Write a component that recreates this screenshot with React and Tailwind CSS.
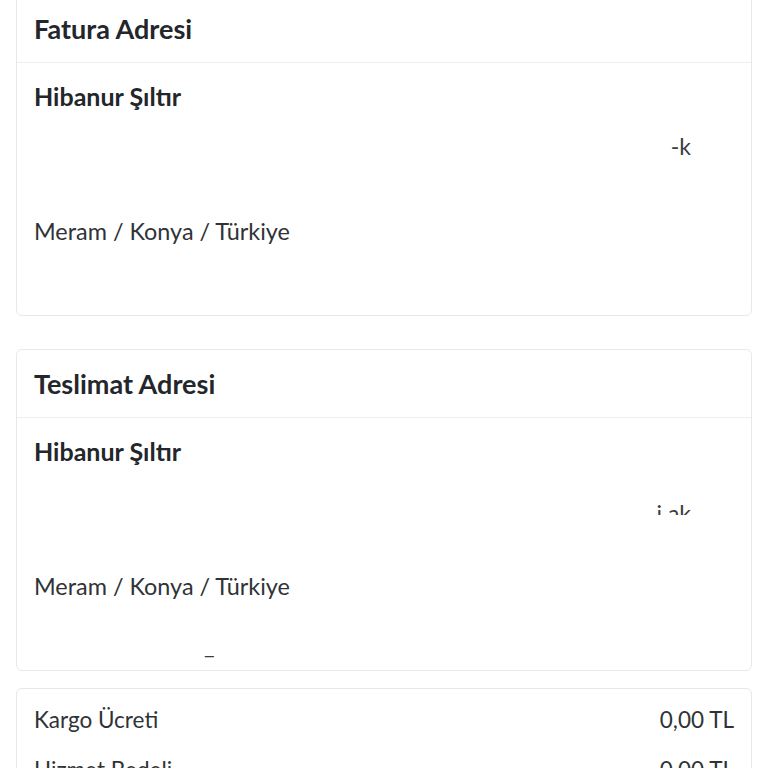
import React from 'react';

const AddressCard = ({ title, name, line1, line2, phone, className }) => (
  <div className={`bg-white border border-[#e6e8eb] rounded-[6px] ${className}`}>
    {/* Başlık */}
    <div className="h-[68px] px-[17px] flex items-center border-b border-[#eceef0]">
      <h2 className="text-[27px] font-bold text-[#23262a] leading-none">{title}</h2>
    </div>

    {/* Adres Bilgileri */}
    <div className="px-[17px] pt-[16px] pb-[10px] text-[#2f3337]">
      <p className="text-[25px] font-bold leading-[34px] text-[#23262a]">{name}</p>
      <div className="mt-[14px] h-[39px] flex items-center text-[23px]">{line1}</div>
      <div className="h-[39px] flex items-center text-[23px]">{line2}</div>
      <p className="mt-[7px] text-[23.4px] leading-[39px]">Meram / Konya / Türkiye</p>
      <div className="mt-[15px] h-[39px] flex items-center text-[23px]">{phone}</div>
    </div>
  </div>
);

export default function App() {
  return (
    <div className="min-h-screen bg-white px-[16px] mt-[-6px]" style={{ fontFamily: 'Lato, "Open Sans", sans-serif' }}>
      <AddressCard
        title="Fatura Adresi"
        name="Hibanur Şıltır"
        line1={<span className="ml-auto mr-[43px] text-[#3a3d40]">-k</span>}
        line2={null}
        phone={null}
      />

      <AddressCard
        className="mt-[33px]"
        title="Teslimat Adresi"
        name="Hibanur Şıltır"
        line1={<span className="ml-auto mr-[43px] text-[#3a3d40] h-[12px] overflow-hidden leading-[20px] self-end mb-[6px]">i ak</span>}
        line2={null}
        phone={<span className="ml-[170px] text-[#3a3d40] mt-[10px]">_</span>}
      />

      {/* Ücret Özeti */}
      <div className="mt-[17px] bg-white border border-[#e6e8eb] rounded-[6px] px-[17px] pt-[12px] text-[22.5px] text-[#2f3337]">
        <div className="h-[38px] flex items-center justify-between">
          <span>Kargo Ücreti</span>
          <span>0,00 TL</span>
        </div>
        <div className="mt-[12px] h-[38px] flex items-center justify-between">
          <span>Hizmet Bedeli</span>
          <span>0,00 TL</span>
        </div>
      </div>
    </div>
  );
}
